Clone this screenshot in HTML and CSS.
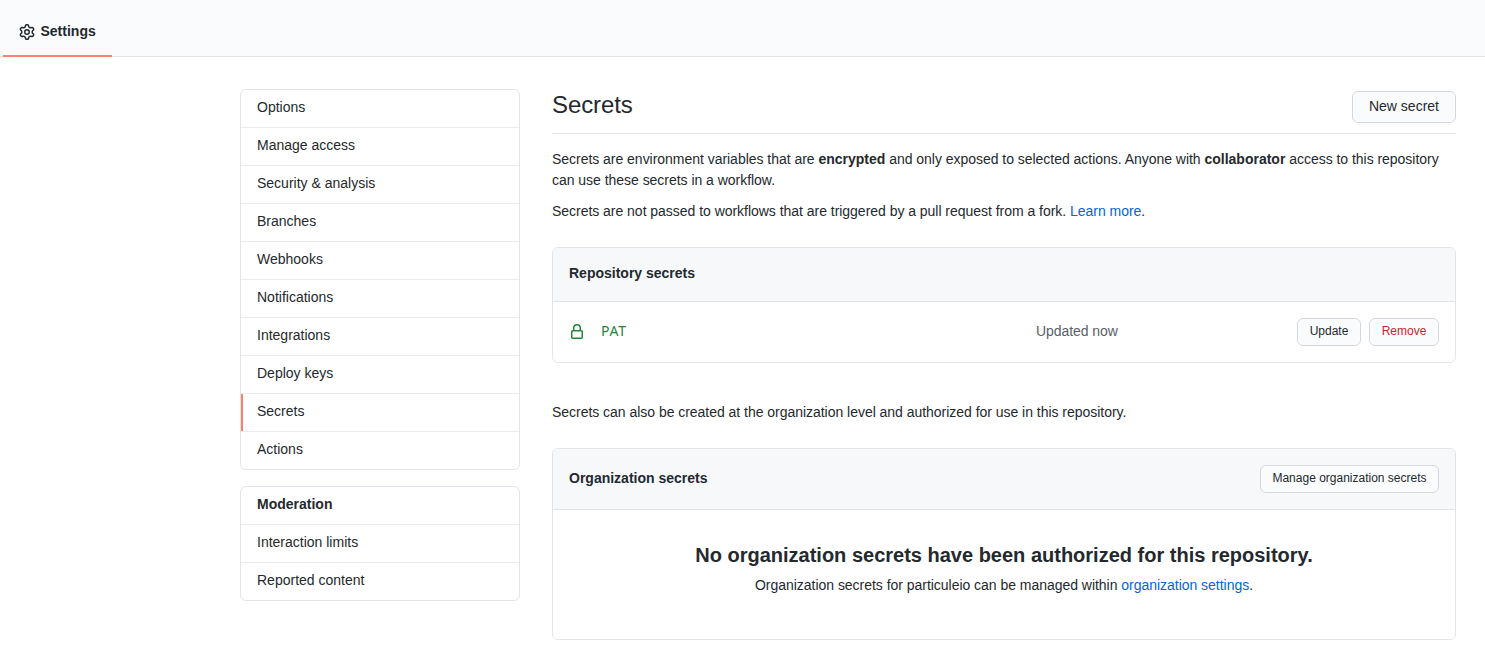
FILE: index.html
```html
<!DOCTYPE html>
<html lang="en">
<head>
<meta charset="utf-8">
<title>Secrets</title>
<link rel="stylesheet" href="styles.css">
</head>
<body>
<header class="topbar">
  <a class="tab"><svg class="gear" viewBox="0 0 16 16" width="16" height="16"><path fill-rule="evenodd" d="M7.429 1.525a6.593 6.593 0 011.142 0c.036.003.108.036.137.146l.289 1.105c.147.56.55.967.997 1.189.174.086.341.183.501.29.417.278.97.423 1.53.27l1.102-.303c.11-.03.175.016.195.046.219.31.41.641.573.989.014.031.022.11-.059.19l-.815.806c-.411.406-.562.957-.53 1.456a4.588 4.588 0 010 .582c-.032.499.119 1.05.53 1.456l.815.806c.08.08.073.159.059.19a6.494 6.494 0 01-.573.99c-.02.029-.086.074-.195.045l-1.103-.303c-.559-.153-1.112-.008-1.529.27-.16.107-.327.204-.5.29-.449.222-.851.628-.998 1.189l-.289 1.105c-.029.11-.101.143-.137.146a6.613 6.613 0 01-1.142 0c-.036-.003-.108-.037-.137-.146l-.289-1.105c-.147-.56-.55-.967-.997-1.189a4.502 4.502 0 01-.501-.29c-.417-.278-.97-.423-1.53-.27l-1.102.303c-.11.03-.175-.016-.195-.046a6.492 6.492 0 01-.573-.989c-.014-.031-.022-.11.059-.19l.815-.806c.411-.406.562-.957.53-1.456a4.587 4.587 0 010-.582c.032-.499-.119-1.05-.53-1.456l-.815-.806c-.08-.08-.073-.159-.059-.19a6.44 6.44 0 01.573-.99c.02-.029.086-.075.195-.045l1.103.303c.559.153 1.112.008 1.529-.27.16-.107.327-.204.5-.29.449-.222.851-.628.998-1.189l.289-1.105c.029-.11.101-.143.137-.146zM8 0c-.236 0-.47.01-.701.03-.743.065-1.29.615-1.458 1.261l-.29 1.106c-.017.066-.078.158-.211.224a5.994 5.994 0 00-.668.386c-.123.082-.233.09-.3.071L3.27 2.776c-.644-.177-1.392.02-1.82.63a7.977 7.977 0 00-.704 1.217c-.315.675-.111 1.422.363 1.891l.815.806c.05.048.098.147.088.294a6.084 6.084 0 000 .772c.01.147-.038.246-.088.294l-.815.806c-.474.469-.678 1.216-.363 1.891.2.428.436.835.704 1.218.428.609 1.176.806 1.82.63l1.103-.303c.066-.019.176-.011.299.071.213.143.436.272.668.386.133.066.194.158.212.224l.289 1.106c.169.646.715 1.196 1.458 1.26a8.094 8.094 0 001.402 0c.743-.064 1.29-.614 1.458-1.26l.29-1.106c.017-.066.078-.158.211-.224a5.98 5.98 0 00.668-.386c.123-.082.233-.09.3-.071l1.102.302c.644.177 1.392-.02 1.82-.63.268-.382.505-.789.704-1.217.315-.675.111-1.422-.364-1.891l-.814-.806c-.05-.048-.098-.147-.088-.294a6.1 6.1 0 000-.772c-.01-.147.039-.246.088-.294l.814-.806c.475-.469.679-1.216.364-1.891a7.992 7.992 0 00-.704-1.218c-.428-.609-1.176-.806-1.82-.63l-1.103.303c-.066.019-.176.011-.299-.071a5.991 5.991 0 00-.668-.386c-.133-.066-.194-.158-.212-.224L10.16 1.29C9.99.645 9.444.095 8.701.031A8.094 8.094 0 008 0zm1.5 8a1.5 1.5 0 11-3 0 1.5 1.5 0 013 0zM11 8a3 3 0 11-6 0 3 3 0 016 0z"/></svg><span>Settings</span></a>
</header>
<div class="layout">
  <aside class="sidebar">
    <nav class="menu">
      <a class="item">Options</a>
      <a class="item">Manage access</a>
      <a class="item">Security &amp; analysis</a>
      <a class="item">Branches</a>
      <a class="item">Webhooks</a>
      <a class="item">Notifications</a>
      <a class="item">Integrations</a>
      <a class="item">Deploy keys</a>
      <a class="item selected">Secrets</a>
      <a class="item">Actions</a>
    </nav>
    <nav class="menu">
      <span class="item heading">Moderation</span>
      <a class="item">Interaction limits</a>
      <a class="item">Reported content</a>
    </nav>
  </aside>
  <main class="content">
    <div class="subhead"><h1>Secrets</h1><button class="btn">New secret</button></div>
    <p>Secrets are environment variables that are <strong>encrypted</strong> and only exposed to selected actions. Anyone with <strong>collaborator</strong> access to this repository can use these secrets in a workflow.</p>
    <p>Secrets are not passed to workflows that are triggered by a pull request from a fork. <a class="link">Learn more</a>.</p>
    <section class="box repo">
      <div class="box-head"><h2>Repository secrets</h2></div>
      <div class="row">
        <svg class="lock" viewBox="0 0 16 16" width="16" height="16"><path fill-rule="evenodd" d="M4 4v2h-.25A1.75 1.75 0 002 7.75v5.5c0 .966.784 1.75 1.75 1.75h8.5A1.75 1.75 0 0014 13.25v-5.5A1.75 1.75 0 0012.25 6H12V4a4 4 0 10-8 0zm6.500 2V4a2.500 2.500 0 10-5 0v2h5zM12 7.500h.25a.25.25 0 01.25.25v5.500a.25.25 0 01-.25.25h-8.500a.25.25 0 01-.25-.25v-5.500a.25.25 0 01.25-.25H12z"/></svg>
        <code class="name">PAT</code>
        <span class="updated">Updated now</span>
        <div class="actions"><button class="btn small">Update</button><button class="btn small danger">Remove</button></div>
      </div>
    </section>
    <p>Secrets can also be created at the organization level and authorized for use in this repository.</p>
    <section class="box org">
      <div class="box-head"><h2>Organization secrets</h2><button class="btn small manage">Manage organization secrets</button></div>
      <div class="blank">
        <h3>No organization secrets have been authorized for this repository.</h3>
        <p>Organization secrets for particuleio can be managed within <a class="link">organization settings</a>.</p>
      </div>
    </section>
  </main>
</div>
</body>
</html>
```

FILE: styles.css
```css
* { box-sizing: border-box; }
body {
  margin: 0;
  background: #fff;
  color: #24292e;
  font: 14px/21px "Liberation Sans", Arial, sans-serif;
}
h1, h2, h3, p { margin: 0; }
strong, h2, h3 { font-weight: 700; }
.topbar {
  display: flex;
  height: 57px;
  padding-left: 3px;
  background: #fafbfc;
  border-bottom: 1px solid #e1e4e8;
}
.tab {
  display: flex;
  align-items: center;
  gap: 6px;
  height: 57px;
  padding: 9px 16px 0;
  border-bottom: 2px solid #f9826c;
  font-weight: 700;
}
.tab span { margin: -2px 0 0 -0.5px; padding-right: 0.5px; }
.gear { fill: #24292e; }
.layout {
  display: flex;
  gap: 32px;
  padding: 32px 29px 0 240px;
}
.sidebar { width: 280px; flex: none; }
.menu {
  margin-bottom: 16px;
  border: 1px solid #e1e4e8;
  border-radius: 6px;
  overflow: hidden;
}
.item {
  display: block;
  height: 38px;
  padding: 7px 16px;
  border-bottom: 1px solid #eaecef;
}
.item:last-child { height: 37px; border-bottom: 0; }
.selected { background: linear-gradient(#f9826c, #f9826c) left top / 2px 37px no-repeat; }
.heading { font-weight: 700; }
.content { flex: 1; min-width: 0; }
.subhead {
  display: flex;
  justify-content: space-between;
  height: 45px;
  margin-bottom: 15px;
  border-bottom: 1px solid #e1e4e8;
}
h1 { font-size: 24px; line-height: 32px; font-weight: 400; letter-spacing: -0.1px; }
p { letter-spacing: -0.03px; }
strong { letter-spacing: 0; }
.content > p { margin-bottom: 10px; }
.btn {
  height: 32px;
  margin: 2px 0 0;
  padding: 0 16px 2px;
  border: 1px solid #d5d8da;
  border-radius: 6px;
  background: #fafbfc;
  color: #24292e;
  font: 14px/20px "Liberation Sans", Arial, sans-serif;
  white-space: nowrap;
}
.small { width: 64px; height: 28px; margin: 0; padding: 0 0 2px; font-size: 12px; }
.danger { width: 70px; color: #cb2431; }
.manage { width: 179px; }
.link { color: #0366d6; }
.box { border: 1px solid #e1e4e8; border-radius: 6px; overflow: hidden; }
.box-head {
  display: flex;
  justify-content: space-between;
  padding: 15px 16px 17px;
  background: #f6f8fa;
  border-bottom: 1px solid #e1e4e8;
}
h2 { font-size: 14px; line-height: 21px; }
.repo { margin: 25px 0 39px; }
.row { display: flex; align-items: center; height: 60px; padding: 0 16px; }
.lock { fill: #22863a; margin-right: 16px; }
.name {
  width: 435px;
  margin-top: -3px;
  color: #22863a;
  font: 14px/21px "Noto Sans", monospace;
  letter-spacing: 0.7px;
}
.updated { color: #586069; margin-top: -2px; letter-spacing: -0.06px; }
.actions { display: flex; gap: 8px; margin-left: auto; }
.org { margin-top: 25px; }
.org .box-head { padding: 16px; }
.org h2 { margin-top: 3px; }
.blank { height: 129px; padding-top: 30px; text-align: center; }
h3 { font-size: 20px; line-height: 30px; }
.blank p { margin-top: 5px; }
```
